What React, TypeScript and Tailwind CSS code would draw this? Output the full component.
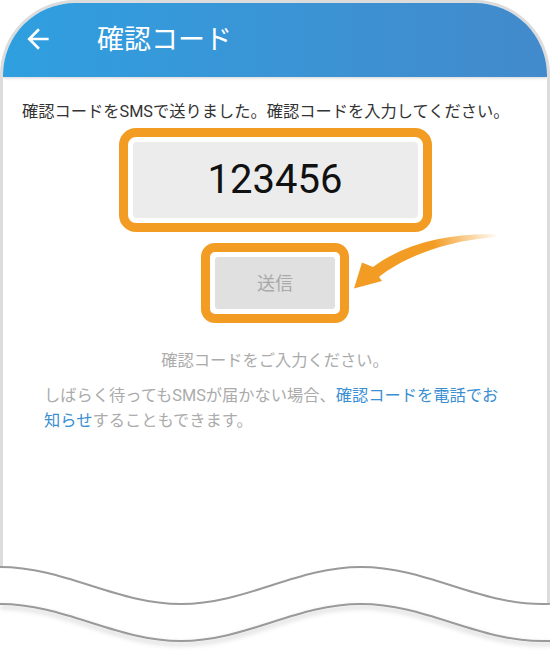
import { MdArrowBack } from "react-icons/md";

const orange = "#f39c24";

function CurvedArrow() {
  return (
    <svg className="absolute left-0 top-0 pointer-events-none" width="550" height="650" viewBox="0 0 550 650">
      <defs>
        <linearGradient id="arrowFade" gradientUnits="userSpaceOnUse" x1="500" y1="236" x2="360" y2="280">
          <stop offset="0" stopColor={orange} stopOpacity="0" />
          <stop offset="0.45" stopColor={orange} stopOpacity="1" />
          <stop offset="1" stopColor={orange} stopOpacity="1" />
        </linearGradient>
      </defs>
      <path
        d="M497 234.5 C450 233 405 243 373 267 L362 262.5 L354 288.5 L382 281 L379 277 C400 260 440 241 497 237 Z"
        fill="url(#arrowFade)"
      />
    </svg>
  );
}

function TornEdge() {
  const wave = "M0 567 C65 567 116 604 181 604 S296 567 361 567 S477 604 542 604 S657 567 722 567";
  const wave2 = "M0 604 C65 604 116 641 181 641 S296 604 361 604 S477 641 542 641 S657 604 722 604";
  return (
    <svg className="absolute left-0 top-0 pointer-events-none" width="550" height="650" viewBox="0 0 550 650">
      <defs>
        <filter id="tornShadow" x="-10%" y="-50%" width="120%" height="200%">
          <feDropShadow dx="0" dy="3" stdDeviation="2.5" floodColor="#000" floodOpacity="0.25" />
        </filter>
      </defs>
      <path d={`${wave} L722 660 L0 660 Z`} fill="#fff" />
      <path d={wave} fill="none" stroke="#9a9a9a" strokeWidth="2" />
      <path d={wave2} fill="none" stroke="#9a9a9a" strokeWidth="2" filter="url(#tornShadow)" />
    </svg>
  );
}

export default function App() {
  return (
    <div className="relative w-[550px] h-[650px] bg-white overflow-hidden font-['Roboto','Noto_Sans_CJK_JP',sans-serif]">
      <div className="h-full border-[3px] border-b-0 border-[#dcdcdc] rounded-t-[75px] overflow-hidden bg-white">
        {/* App bar */}
        <div className="relative z-10 h-[74px] flex items-center bg-gradient-to-r from-[#2e9fe0] to-[#428acb] shadow-[0_1px_3px_rgba(0,0,0,0.18)]">
          <MdArrowBack className="ml-[19px] mt-[-3px] text-white" size={32} />
          <span className="ml-[43px] text-[27px] leading-none text-white">確認コード</span>
        </div>

        {/* Body */}
        <div className="flex flex-col">
          <p className="mt-[23px] pl-[19px] text-[16.25px] leading-[24px] text-[#333333] whitespace-nowrap">
            確認コードをSMSで送りました。確認コードを入力してください。
          </p>

          <div className="mt-[4px] mx-auto w-[313px] border-[9px] border-[#f39c24] rounded-[17px] p-[5px]">
            <div className="h-[76px] rounded-[4px] bg-[#ececec] flex items-center justify-center text-[40px] text-[#111111]">
              123456
            </div>
          </div>

          <div className="mt-[11px] mx-auto w-[148px] border-[9px] border-[#f39c24] rounded-[14px] p-[5px]">
            <div className="h-[52px] rounded-[3px] bg-[#e0e0e0] flex items-center justify-center text-[18px] text-[#a9a9a9]">
              送信
            </div>
          </div>

          <p className="mt-[26px] text-center text-[16.25px] leading-[24px] text-[#ababab]">
            確認コードをご入力ください。
          </p>

          <p className="mt-[10px] px-[41px] text-[16.25px] leading-[25px] text-[#ababab] whitespace-nowrap">
            しばらく待ってもSMSが届かない場合、<span className="text-[#3b8fd2]">確認コードを電話でお</span>
            <br />
            <span className="text-[#3b8fd2]">知らせ</span>することもできます。
          </p>
        </div>
      </div>

      <CurvedArrow />
      <TornEdge />
    </div>
  );
}
